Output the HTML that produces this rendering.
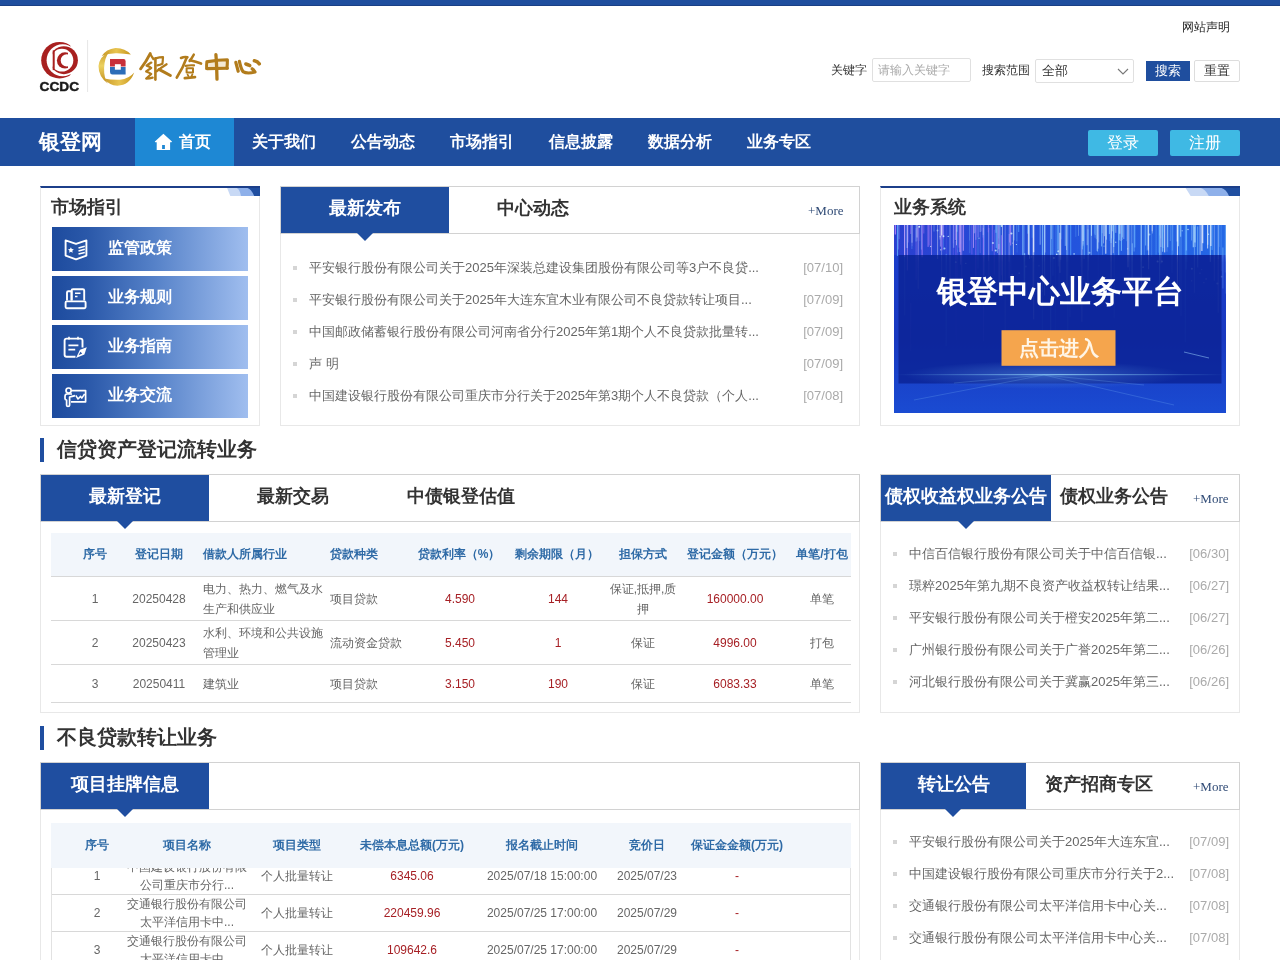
<!DOCTYPE html>
<html><head><meta charset="utf-8">
<style>
*{margin:0;padding:0;box-sizing:border-box}
html,body{width:1280px;height:960px;overflow:hidden;background:#fff}
body{position:relative;font-family:"Liberation Sans",sans-serif;color:#333;font-size:13px}
.a{position:absolute}
.topbar{left:0;top:0;width:1280px;height:6px;background:#1f4e9e;border-bottom:1px solid #1a3f85}
.nav{left:0;top:118px;width:1280px;height:48px;background:#1f4e9e}
.nav .brand{position:absolute;left:39px;top:0;line-height:48px;font-size:21px;font-weight:bold;color:#fff}
.nav .it{position:absolute;top:0;width:99px;height:48px;line-height:48px;text-align:center;font-size:16px;font-weight:bold;color:#fff}
.nav .on{background:#1e88d4}
.nav .btn{position:absolute;top:12px;width:70px;height:26px;line-height:26px;text-align:center;font-size:16px;color:#fff;background:#3fb9e4;border-radius:2px}
.corner{position:absolute;right:-1px;top:-2px;width:34px;height:10px}
.ptitle{position:absolute;font-size:18px;font-weight:bold;color:#333;line-height:20px}
.menu{position:absolute;left:11px;width:196px;height:44px;background:linear-gradient(90deg,#1d4b9e 0%,#2a58a9 18%,#5581c8 52%,#a0beef 100%)}
.menu span{position:absolute;left:56px;top:-1px;line-height:44px;font-size:16px;font-weight:bold;color:#fff}
.menu svg{position:absolute;left:4px;top:5px}
.hd{position:absolute;left:0;top:0;right:0;height:48px;border:1px solid #d2d2d2}
.tab{position:absolute;top:0;height:46px;line-height:42px;text-align:center;font-size:18px;font-weight:bold;color:#333}
.tab.on{background:#1f4ea0;color:#fff}
.tri{position:absolute;width:0;height:0;border-left:8px solid transparent;border-right:8px solid transparent;border-top:8px solid #1f4ea0}
.more{position:absolute;font-family:"Liberation Serif",serif;font-size:13px;color:#2f4a75;line-height:16px}
.lst{position:absolute;left:0;right:0}
.li{position:absolute;left:0;right:0;height:32px;line-height:32px;font-size:13px;color:#666;white-space:nowrap}
.li i{position:absolute;top:14px;width:4px;height:4px;background:#d5d5d5}
.li b{position:absolute;font-weight:normal}
.li em{position:absolute;font-style:normal;color:#aaa}
.tbh{position:absolute;background:#f2f6fb;border-bottom:1px solid #d8d8d8}
.th{position:absolute;font-size:12px;font-weight:bold;color:#2e6aa6;white-space:nowrap;line-height:20px}
.td{position:absolute;font-size:12px;color:#666;line-height:20px;white-space:nowrap}
.red{color:#a61f24}
.rl{position:absolute;height:1px;background:#d8d8d8}
.c{transform:translateX(-50%);text-align:center}
.sec{position:absolute;left:40px;width:4px;height:24px;background:#1f4ea0}
.sect{position:absolute;left:57px;font-size:20px;font-weight:bold;color:#333;line-height:24px}
</style></head><body><div style="position:absolute;left:0;top:0;width:1280px;height:960px;will-change:transform">
<div class="a topbar"></div>

<!-- logo -->
<svg class="a" style="left:0;top:0" width="280" height="110" viewBox="0 0 280 110">
  <defs>
    <mask id="m1"><rect width="280" height="110" fill="#000"/><circle cx="59.5" cy="60.2" r="18.3" fill="#fff"/><circle cx="62.6" cy="60.2" r="16" fill="#000"/><rect x="70.5" y="0" width="30" height="110" fill="#000"/></mask>
    <mask id="m2"><rect width="280" height="110" fill="#000"/><circle cx="63.9" cy="60.2" r="14" fill="#fff"/><circle cx="61.9" cy="60.2" r="11.4" fill="#000"/><rect x="0" y="0" width="52.7" height="110" fill="#000"/><rect x="52.7" y="50.4" width="2" height="19.7" fill="#fff"/></mask>
    <mask id="m3"><rect width="280" height="110" fill="#000"/><circle cx="65" cy="60.4" r="8.1" fill="#fff"/><circle cx="66.8" cy="60.4" r="6.1" fill="#000"/><rect x="68" y="0" width="30" height="110" fill="#000"/></mask>
    <linearGradient id="gold" x1="0" y1="0" x2="1" y2="0"><stop offset="0" stop-color="#c99a2a"/><stop offset="0.5" stop-color="#e8c450"/><stop offset="1" stop-color="#c7961f"/></linearGradient><linearGradient id="gold2" x1="0" y1="0" x2="0" y2="1"><stop offset="0" stop-color="#c99a2a"/><stop offset="0.45" stop-color="#ecd160"/><stop offset="1" stop-color="#c18c1c"/></linearGradient>
  </defs>
  <rect width="280" height="110" fill="#a8201f" mask="url(#m1)"/>
  <rect width="280" height="110" fill="#a8201f" mask="url(#m2)"/>
  <rect width="280" height="110" fill="#a8201f" mask="url(#m3)"/>
  <text x="39.6" y="91.4" font-family="Liberation Sans" font-weight="bold" font-size="13.2" fill="#1a1a1a" stroke="#1a1a1a" stroke-width="0.45" textLength="39.4" lengthAdjust="spacingAndGlyphs">CCDC</text>
  <line x1="87.6" y1="40" x2="87.6" y2="92" stroke="#e6e6e6" stroke-width="1"/>
  <path d="M101.8 56 Q106 49.2 115.5 48 Q125 47.8 130.9 54.6 Q124 53.8 117 53.3 Q109 53 101.8 56 Z" fill="url(#gold)"/>
  <path d="M109.4 51.4 Q99.4 56.5 98.5 66 Q98.5 77 107.8 83.4 Q103.8 78 104.1 68 Q104.3 58 109.4 51.4 Z" fill="url(#gold2)"/>
  <path d="M104.2 78.4 Q109 85.2 117.5 85.7 Q129.5 85.6 134.2 72.6 Q129 79 120 79.7 Q111 80 104.2 78.4 Z" fill="url(#gold)"/>
  <path d="M110 59.1 H123.6 Q125.6 59.1 125.6 61.5 V66.6 H110 Z" fill="#c8303a"/>
  <path d="M110 67 H125.6 V74.5 H112.4 Q110 74.5 110 72 Z" fill="#2c6db8"/>
  <rect x="114.9" y="64.2" width="5.9" height="5.5" fill="#fff"/>
  <g fill="none" stroke="#b27c1c" stroke-linecap="round" stroke-linejoin="round">
  <!-- 銀 -->
  <path d="M150.2 53.6 Q146 62 140.6 68.8" stroke-width="2.9"/>
  <path d="M150.4 54.2 Q152 57 153.4 59" stroke-width="2.3"/>
  <path d="M151.3 62.6 Q148 64.5 146.6 65.6 Q150 66.6 151.2 68 Q148 70 146.2 71.5 Q150 72.8 151.2 74 Q148 77 146.2 78.6 Q149.5 78.6 152.6 77.6" stroke-width="2.3"/>
  <path d="M155.4 58.4 V79.6" stroke-width="2.6"/>
  <path d="M155.6 58.4 Q159.6 57.2 163 57.2 Q162.8 61 162.4 63.8 Q160 65 157.4 65.4" stroke-width="2.2"/>
  <path d="M156.6 71.4 Q161 67.6 166.6 64.2" stroke-width="2.2"/>
  <path d="M159 69.4 Q164 72 170.4 75.6" stroke-width="2.9"/>
  <!-- 登 -->
  <path d="M181 58 Q184.5 56.4 187.4 57.2" stroke-width="2.6"/>
  <path d="M186.8 57.4 Q183 68 176.8 77.6" stroke-width="2.7"/>
  <path d="M193.8 54.6 Q192 58 189.6 61" stroke-width="2.4"/>
  <path d="M190 60.2 Q196 61.6 201 63.6" stroke-width="2.7"/>
  <path d="M185.6 65.8 Q190 65 194 65.4" stroke-width="2.2"/>
  <path d="M186.6 68.2 V72.6 M186.6 68.2 H193 V72.6 M186.6 72.6 H193" stroke-width="2"/>
  <path d="M187.6 74.6 L188.4 76 M192.4 74.4 L191.6 76" stroke-width="1.8"/>
  <path d="M184.8 78.2 Q190 77.6 195 77.2" stroke-width="2.7"/>
  <!-- 中 -->
  <path d="M208 62.4 L226.6 60.6 L226.6 67.6 L207.6 68 Z" fill="#c8902a" fill-opacity="0.2" stroke="none"/>
  <path d="M215.9 54.6 Q216.6 62 217 79.2" stroke-width="3.3"/>
  <path d="M206.8 61.6 Q206.4 65 206.6 68.6" stroke-width="2.9"/>
  <path d="M208 61.6 Q218 60 227.4 59.8 Q227.4 64 227 68.2" stroke-width="3.1"/>
  <path d="M207 68.6 Q217 68.2 227.4 68.2" stroke-width="3.1"/>
  <!-- 心 -->
  <path d="M235.8 62.4 Q237 67 238.2 71.2" stroke-width="3.2"/>
  <path d="M239.4 61.4 Q241 69 243 71.6 Q247 74.2 255 72 Q254 70 252.2 68.8" stroke-width="3.2"/>
  <path d="M245.8 64 Q248 64.6 249.8 65.6" stroke-width="3.4"/>
  <path d="M254.4 60.8 Q257.6 61.4 259.2 63.8" stroke-width="3.6"/>
</g>
</svg>

<div class="a" style="left:1182px;top:19px;font-size:12px;color:#222;line-height:16px">网站声明</div>

<!-- search -->
<div class="a" style="left:831px;top:62px;font-size:12px;line-height:16px;color:#333">关键字</div>
<div class="a" style="left:872px;top:58px;width:99px;height:24px;border:1px solid #e0e0e0;border-radius:2px;font-size:12px;line-height:22px;color:#aaa;padding-left:5px">请输入关键字</div>
<div class="a" style="left:982px;top:62px;font-size:12px;line-height:16px;color:#333">搜索范围</div>
<div class="a" style="left:1035px;top:59px;width:99px;height:24px;border:1px solid #e0e0e0;border-radius:2px;font-size:13px;line-height:22px;color:#333;padding-left:6px">全部</div>
<svg class="a" style="left:1117px;top:66px" width="12" height="10"><path d="M1 3 L6 8 L11 3" fill="none" stroke="#777" stroke-width="1.1"/></svg>
<div class="a" style="left:1146px;top:61px;width:44px;height:20px;background:#1f4e9e;color:#fff;font-size:13px;line-height:20px;text-align:center">搜索</div>
<div class="a" style="left:1194px;top:60px;width:46px;height:22px;border:1px solid #ddd;border-radius:2px;color:#333;font-size:13px;line-height:20px;text-align:center">重置</div>

<!-- nav -->
<div class="a nav">
  <div class="brand">银登网</div>
  <div class="it on" style="left:135px">
    <svg style="position:absolute;left:19px;top:15px" width="19" height="18" viewBox="0 0 19 18"><path fill-rule="evenodd" d="M9.4 0.8 L17.9 8.4 Q18.2 9.2 17.3 9.2 H16.1 V16.9 H2.7 V9.2 H1.5 Q0.6 9.2 0.9 8.4 Z M8.1 11.9 H10.9 V15.9 H8.1 Z" fill="#fff"/></svg>
    <span style="position:absolute;left:44px">首页</span>
  </div>
  <div class="it" style="left:234px">关于我们</div>
  <div class="it" style="left:333px">公告动态</div>
  <div class="it" style="left:432px">市场指引</div>
  <div class="it" style="left:531px">信息披露</div>
  <div class="it" style="left:630px">数据分析</div>
  <div class="it" style="left:729px">业务专区</div>
  <div class="btn" style="left:1088px">登录</div>
  <div class="btn" style="left:1170px">注册</div>
</div>

<!-- ROW1 -->
<div class="a" style="left:40px;top:186px;width:220px;height:240px;border:1px solid #e8e8e8;border-top:2px solid #1c3f8a">
  
  <div class="ptitle" style="left:10px;top:9px">市场指引</div>
  <div class="menu" style="top:39px"><svg width="40" height="36" viewBox="0 0 40 36" fill="none" stroke="#fff" stroke-width="1.9" stroke-linejoin="round"><path d="M9.6 8.4 L20 11.8 L30.4 8.4 V23.6 L20 27.4 L9.6 23.6 Z"/><path d="M14.9 15.2 l0.9 1.9 2 .2 -1.5 1.4 .4 2 -1.8-1 -1.8 1 .4-2 -1.5-1.4 2-.2 Z" fill="#fff" stroke="none"/><path d="M22.5 16 L28.8 14.2 M22.5 19 L28.8 17.2 M22.5 22 L28.8 20.4" stroke-width="1.5"/></svg><span>监管政策</span></div>
  <div class="menu" style="top:88px"><svg width="40" height="36" viewBox="0 0 40 36" fill="none" stroke="#fff" stroke-width="1.9" stroke-linejoin="round"><path d="M11 19.6 V11.5 Q11 10.2 12.3 10.2 H15.6 V19.6"/><path d="M15.6 19.6 V9.6 Q15.6 8.2 17 8.2 H26.8 Q28.2 8.2 28.2 9.6 V19.6"/><rect x="9.6" y="20.4" width="20" height="6.8" rx="1.2"/><path d="M19 12.2 H24.5 M19 15.6 H21.5" stroke-width="1.5"/></svg><span>业务规则</span></div>
  <div class="menu" style="top:137px"><svg width="40" height="36" viewBox="0 0 40 36" fill="none" stroke="#fff" stroke-width="1.9" stroke-linejoin="round"><path d="M19.5 26.8 H10.6 Q8.6 26.8 8.6 24.8 V10.6 Q8.6 8.6 10.6 8.6 H24.5 Q26.5 8.6 26.5 10.6 V17.6"/><path d="M13 6.8 V9.6 M22 6.8 V9.6 M12.4 15.4 H22.4 M12.4 19.6 H19.2" stroke-width="1.6"/><path d="M20 28 L24 19.8 L30.8 17.2 L28.4 24.6 Z" fill="#fff" stroke="none"/><path d="M22.6 25.2 L26.2 23.6 L24.4 21.8 Z" fill="#2553a6" stroke="none"/></svg><span>业务指南</span></div>
  <div class="menu" style="top:186px"><svg width="40" height="36" viewBox="0 0 40 36" fill="none" stroke="#fff" stroke-width="1.7" stroke-linejoin="round"><circle cx="12.6" cy="11.6" r="2.6"/><path d="M16 15 H11 Q9 15 9 17.5 V19.6 Q9 21 10.6 21 V26.2 Q10.6 27.4 12 27.4 Q13.6 27.4 13.6 26.2 V18 Q16 17.4 19 16.6"/><path d="M16 11.6 H29.6 V22.8 H15"/><path d="M19.8 16.4 L22 20 L24.6 17.4 L25.8 19.2 L28.6 15" stroke-width="1.5"/></svg><span>业务交流</span></div>
</div>

<div class="a" style="left:280px;top:186px;width:580px;height:240px;border:1px solid #e8e8e8">
  <div class="hd" style="left:-1px;top:-1px;right:-1px"></div>
  <div class="tab on" style="left:0;width:168px">最新发布</div>
  <div class="tri" style="left:76px;top:46px"></div>
  <div class="tab" style="left:168px;width:168px">中心动态</div>
  <div class="more" style="left:527px;top:16px">+More</div>
  <div class="lst" style="top:65px">
    <div class="li" style="top:0"><i style="left:12px"></i><b style="left:28px">平安银行股份有限公司关于2025年深装总建设集团股份有限公司等3户不良贷...</b><em style="right:16px">[07/10]</em></div>
    <div class="li" style="top:32px"><i style="left:12px"></i><b style="left:28px">平安银行股份有限公司关于2025年大连东宜木业有限公司不良贷款转让项目...</b><em style="right:16px">[07/09]</em></div>
    <div class="li" style="top:64px"><i style="left:12px"></i><b style="left:28px">中国邮政储蓄银行股份有限公司河南省分行2025年第1期个人不良贷款批量转...</b><em style="right:16px">[07/09]</em></div>
    <div class="li" style="top:96px"><i style="left:12px"></i><b style="left:28px">声 明</b><em style="right:16px">[07/09]</em></div>
    <div class="li" style="top:128px"><i style="left:12px"></i><b style="left:28px">中国建设银行股份有限公司重庆市分行关于2025年第3期个人不良贷款（个人...</b><em style="right:16px">[07/08]</em></div>
  </div>
</div>

<div class="a" style="left:880px;top:186px;width:360px;height:240px;border:1px solid #e8e8e8;border-top:2px solid #1c3f8a">
  
  <div class="ptitle" style="left:13px;top:9px">业务系统</div>
  <div id="banner" style="position:absolute;left:13px;top:37px;width:332px;height:188px;background:#1a47c4;overflow:hidden">
<svg width="332" height="188" viewBox="0 0 332 188" style="position:absolute;left:0;top:0">
<defs>
<linearGradient id="topg" x1="0" y1="0" x2="1" y2="0"><stop offset="0" stop-color="#2a3fd0"/><stop offset="0.5" stop-color="#2352dc"/><stop offset="1" stop-color="#2468e6"/></linearGradient><linearGradient id="bg1" x1="0" y1="0" x2="0" y2="1"><stop offset="0" stop-color="#1b3fcf"/><stop offset="0.6" stop-color="#1838c0"/><stop offset="1" stop-color="#1a4bd2"/></linearGradient>
<linearGradient id="fade" x1="0" y1="0" x2="0" y2="1"><stop offset="0" stop-color="#fff" stop-opacity="1"/><stop offset="0.16" stop-color="#fff" stop-opacity="1"/><stop offset="0.2" stop-color="#fff" stop-opacity="0.55"/><stop offset="0.7" stop-color="#fff" stop-opacity="0.25"/><stop offset="1" stop-color="#fff" stop-opacity="0"/></linearGradient>
<mask id="fm"><rect width="332" height="188" fill="url(#fade)"/></mask>
<radialGradient id="glow" cx="0.5" cy="0.5" r="0.5"><stop offset="0" stop-color="#7fc8ff" stop-opacity="0.6"/><stop offset="1" stop-color="#7fc8ff" stop-opacity="0"/></radialGradient>
<linearGradient id="hl" x1="0" y1="0" x2="1" y2="0"><stop offset="0" stop-color="#7fd0ff" stop-opacity="0"/><stop offset="0.5" stop-color="#9fe0ff" stop-opacity="0.7"/><stop offset="1" stop-color="#7fd0ff" stop-opacity="0"/></linearGradient>
</defs>
<rect width="332" height="188" fill="url(#bg1)"/><rect width="332" height="30" fill="url(#topg)"/>
<g mask="url(#fm)"><line x1="150.2" y1="0.0" x2="150.2" y2="30.0" stroke="#8fd0ff" stroke-width="0.7" stroke-opacity="0.60"/><line x1="266.9" y1="0.0" x2="266.9" y2="22.0" stroke="#ffffff" stroke-width="1.1" stroke-opacity="0.39"/><line x1="320.3" y1="0.2" x2="320.3" y2="55.8" stroke="#ffffff" stroke-width="0.5" stroke-opacity="0.62"/><line x1="63.1" y1="0.0" x2="63.1" y2="6.8" stroke="#8fd0ff" stroke-width="0.9" stroke-opacity="0.56"/><line x1="165.9" y1="7.8" x2="165.9" y2="47.9" stroke="#ffffff" stroke-width="0.9" stroke-opacity="0.90"/><line x1="104.7" y1="0.0" x2="104.7" y2="13.5" stroke="#60b0ff" stroke-width="0.5" stroke-opacity="0.54"/><line x1="318.1" y1="0.0" x2="318.1" y2="25.0" stroke="#60b0ff" stroke-width="1.1" stroke-opacity="0.58"/><line x1="24.2" y1="2.1" x2="24.2" y2="63.9" stroke="#ffffff" stroke-width="0.7" stroke-opacity="0.50"/><line x1="81.8" y1="0.0" x2="81.8" y2="7.6" stroke="#a070ff" stroke-width="0.7" stroke-opacity="0.41"/><line x1="327.1" y1="0.0" x2="327.1" y2="46.0" stroke="#8fd0ff" stroke-width="0.5" stroke-opacity="0.54"/><line x1="89.6" y1="0.0" x2="89.6" y2="116.2" stroke="#a070ff" stroke-width="0.5" stroke-opacity="0.83"/><line x1="14.0" y1="0.0" x2="14.0" y2="17.5" stroke="#c58cff" stroke-width="0.5" stroke-opacity="0.80"/><line x1="69.3" y1="0.0" x2="69.3" y2="25.8" stroke="#e0b0ff" stroke-width="1.1" stroke-opacity="0.67"/><line x1="276.3" y1="0.0" x2="276.3" y2="16.0" stroke="#8fd0ff" stroke-width="0.7" stroke-opacity="0.49"/><line x1="240.8" y1="0.0" x2="240.8" y2="22.4" stroke="#60b0ff" stroke-width="1.1" stroke-opacity="0.71"/><line x1="200.4" y1="0.0" x2="200.4" y2="8.7" stroke="#60b0ff" stroke-width="0.9" stroke-opacity="0.44"/><line x1="139.7" y1="0.0" x2="139.7" y2="94.4" stroke="#ffffff" stroke-width="0.7" stroke-opacity="0.86"/><line x1="75.8" y1="0.0" x2="75.8" y2="28.2" stroke="#8fd0ff" stroke-width="0.5" stroke-opacity="0.47"/><line x1="23.0" y1="0.0" x2="23.0" y2="12.5" stroke="#ffffff" stroke-width="0.9" stroke-opacity="0.62"/><line x1="46.0" y1="0.0" x2="46.0" y2="14.6" stroke="#ffffff" stroke-width="0.5" stroke-opacity="0.61"/><line x1="157.6" y1="0.0" x2="157.6" y2="14.1" stroke="#ffffff" stroke-width="0.9" stroke-opacity="0.34"/><line x1="105.9" y1="0.0" x2="105.9" y2="65.3" stroke="#8fd0ff" stroke-width="0.9" stroke-opacity="0.74"/><line x1="116.8" y1="0.0" x2="116.8" y2="70.0" stroke="#60b0ff" stroke-width="0.5" stroke-opacity="0.55"/><line x1="207.5" y1="0.0" x2="207.5" y2="21.1" stroke="#ffffff" stroke-width="0.9" stroke-opacity="0.35"/><line x1="292.1" y1="0.0" x2="292.1" y2="44.4" stroke="#60b0ff" stroke-width="1.1" stroke-opacity="0.65"/><line x1="278.3" y1="0.0" x2="278.3" y2="25.5" stroke="#8fd0ff" stroke-width="0.5" stroke-opacity="0.59"/><line x1="165.1" y1="0.4" x2="165.1" y2="71.0" stroke="#8fd0ff" stroke-width="0.7" stroke-opacity="0.48"/><line x1="250.3" y1="0.0" x2="250.3" y2="30.2" stroke="#60b0ff" stroke-width="0.9" stroke-opacity="0.44"/><line x1="65.9" y1="0.0" x2="65.9" y2="27.0" stroke="#e0b0ff" stroke-width="0.9" stroke-opacity="0.83"/><line x1="69.7" y1="0.0" x2="69.7" y2="15.1" stroke="#a070ff" stroke-width="0.7" stroke-opacity="0.32"/><line x1="37.5" y1="0.0" x2="37.5" y2="30.1" stroke="#e0b0ff" stroke-width="0.9" stroke-opacity="0.53"/><line x1="237.8" y1="0.0" x2="237.8" y2="56.2" stroke="#b8e4ff" stroke-width="0.5" stroke-opacity="0.80"/><line x1="225.2" y1="0.0" x2="225.2" y2="15.2" stroke="#8fd0ff" stroke-width="1.1" stroke-opacity="0.64"/><line x1="151.0" y1="0.0" x2="151.0" y2="27.6" stroke="#ffffff" stroke-width="1.1" stroke-opacity="0.33"/><line x1="36.2" y1="0.0" x2="36.2" y2="22.6" stroke="#a070ff" stroke-width="0.9" stroke-opacity="0.35"/><line x1="59.3" y1="0.0" x2="59.3" y2="18.3" stroke="#a070ff" stroke-width="0.7" stroke-opacity="0.41"/><line x1="130.6" y1="28.3" x2="130.6" y2="70.3" stroke="#8fd0ff" stroke-width="1.1" stroke-opacity="0.73"/><line x1="150.6" y1="0.0" x2="150.6" y2="70.5" stroke="#b8e4ff" stroke-width="1.1" stroke-opacity="0.64"/><line x1="108.4" y1="0.0" x2="108.4" y2="66.9" stroke="#ffffff" stroke-width="0.7" stroke-opacity="0.78"/><line x1="80.4" y1="0.0" x2="80.4" y2="8.3" stroke="#b8e4ff" stroke-width="0.5" stroke-opacity="0.89"/><line x1="115.7" y1="0.0" x2="115.7" y2="17.5" stroke="#c58cff" stroke-width="0.7" stroke-opacity="0.76"/><line x1="268.6" y1="0.0" x2="268.6" y2="26.8" stroke="#8fd0ff" stroke-width="1.1" stroke-opacity="0.77"/><line x1="49.4" y1="0.0" x2="49.4" y2="24.8" stroke="#60b0ff" stroke-width="0.5" stroke-opacity="0.71"/><line x1="251.6" y1="0.0" x2="251.6" y2="20.5" stroke="#8fd0ff" stroke-width="0.9" stroke-opacity="0.64"/><line x1="103.5" y1="0.0" x2="103.5" y2="28.0" stroke="#b8e4ff" stroke-width="1.1" stroke-opacity="0.42"/><line x1="66.7" y1="0.0" x2="66.7" y2="19.1" stroke="#60b0ff" stroke-width="0.5" stroke-opacity="0.32"/><line x1="163.0" y1="0.0" x2="163.0" y2="28.3" stroke="#60b0ff" stroke-width="0.9" stroke-opacity="0.55"/><line x1="81.8" y1="0.0" x2="81.8" y2="14.8" stroke="#b8e4ff" stroke-width="0.5" stroke-opacity="0.86"/><line x1="63.6" y1="24.4" x2="63.6" y2="71.3" stroke="#c58cff" stroke-width="0.5" stroke-opacity="0.31"/><line x1="228.1" y1="0.0" x2="228.1" y2="15.2" stroke="#ffffff" stroke-width="0.9" stroke-opacity="0.36"/><line x1="238.3" y1="18.3" x2="238.3" y2="68.9" stroke="#8fd0ff" stroke-width="0.7" stroke-opacity="0.80"/><line x1="286.8" y1="0.0" x2="286.8" y2="11.7" stroke="#8fd0ff" stroke-width="0.7" stroke-opacity="0.65"/><line x1="303.7" y1="1.4" x2="303.7" y2="42.4" stroke="#8fd0ff" stroke-width="0.7" stroke-opacity="0.83"/><line x1="258.4" y1="0.0" x2="258.4" y2="8.5" stroke="#ffffff" stroke-width="0.9" stroke-opacity="0.38"/><line x1="128.8" y1="0.0" x2="128.8" y2="30.5" stroke="#8fd0ff" stroke-width="1.1" stroke-opacity="0.72"/><line x1="208.5" y1="0.0" x2="208.5" y2="29.8" stroke="#b8e4ff" stroke-width="0.5" stroke-opacity="0.51"/><line x1="234.0" y1="0.0" x2="234.0" y2="42.2" stroke="#ffffff" stroke-width="1.1" stroke-opacity="0.80"/><line x1="35.2" y1="0.0" x2="35.2" y2="20.3" stroke="#c58cff" stroke-width="0.5" stroke-opacity="0.64"/><line x1="67.7" y1="0.0" x2="67.7" y2="74.5" stroke="#e0b0ff" stroke-width="1.1" stroke-opacity="0.36"/><line x1="25.8" y1="0.0" x2="25.8" y2="16.2" stroke="#a070ff" stroke-width="0.5" stroke-opacity="0.51"/><line x1="210.5" y1="0.0" x2="210.5" y2="11.2" stroke="#b8e4ff" stroke-width="1.1" stroke-opacity="0.52"/><line x1="306.1" y1="0.0" x2="306.1" y2="29.7" stroke="#ffffff" stroke-width="1.1" stroke-opacity="0.49"/><line x1="189.1" y1="0.0" x2="189.1" y2="21.2" stroke="#b8e4ff" stroke-width="0.5" stroke-opacity="0.76"/><line x1="247.2" y1="0.0" x2="247.2" y2="65.7" stroke="#b8e4ff" stroke-width="1.1" stroke-opacity="0.84"/><line x1="254.1" y1="0.0" x2="254.1" y2="24.8" stroke="#ffffff" stroke-width="0.9" stroke-opacity="0.58"/><line x1="328.9" y1="22.6" x2="328.9" y2="63.5" stroke="#8fd0ff" stroke-width="1.1" stroke-opacity="0.48"/><line x1="189.1" y1="0.0" x2="189.1" y2="16.1" stroke="#ffffff" stroke-width="1.1" stroke-opacity="0.69"/><line x1="325.4" y1="0.0" x2="325.4" y2="22.0" stroke="#60b0ff" stroke-width="0.5" stroke-opacity="0.45"/><line x1="252.8" y1="0.0" x2="252.8" y2="25.5" stroke="#60b0ff" stroke-width="0.5" stroke-opacity="0.50"/><line x1="211.8" y1="0.0" x2="211.8" y2="28.8" stroke="#ffffff" stroke-width="1.1" stroke-opacity="0.76"/><line x1="308.8" y1="0.0" x2="308.8" y2="18.3" stroke="#ffffff" stroke-width="1.1" stroke-opacity="0.67"/><line x1="313.8" y1="0.0" x2="313.8" y2="19.7" stroke="#b8e4ff" stroke-width="1.1" stroke-opacity="0.52"/><line x1="217.5" y1="0.0" x2="217.5" y2="13.4" stroke="#ffffff" stroke-width="0.7" stroke-opacity="0.48"/><line x1="194.5" y1="0.0" x2="194.5" y2="45.4" stroke="#b8e4ff" stroke-width="1.1" stroke-opacity="0.33"/><line x1="16.7" y1="78.0" x2="16.7" y2="126.1" stroke="#c58cff" stroke-width="0.5" stroke-opacity="0.56"/><line x1="173.8" y1="0.0" x2="173.8" y2="110.6" stroke="#8fd0ff" stroke-width="0.5" stroke-opacity="0.89"/><line x1="16.7" y1="0.0" x2="16.7" y2="9.1" stroke="#a070ff" stroke-width="1.1" stroke-opacity="0.51"/><line x1="46.4" y1="0.0" x2="46.4" y2="21.6" stroke="#e0b0ff" stroke-width="0.7" stroke-opacity="0.71"/><line x1="316.3" y1="0.0" x2="316.3" y2="36.9" stroke="#b8e4ff" stroke-width="0.9" stroke-opacity="0.77"/><line x1="90.1" y1="0.0" x2="90.1" y2="53.2" stroke="#8fd0ff" stroke-width="0.7" stroke-opacity="0.68"/><line x1="166.7" y1="0.0" x2="166.7" y2="34.8" stroke="#ffffff" stroke-width="0.9" stroke-opacity="0.68"/><line x1="86.2" y1="0.0" x2="86.2" y2="7.0" stroke="#8fd0ff" stroke-width="0.7" stroke-opacity="0.75"/><line x1="209.5" y1="0.0" x2="209.5" y2="18.4" stroke="#ffffff" stroke-width="0.5" stroke-opacity="0.75"/><line x1="148.5" y1="0.0" x2="148.5" y2="66.9" stroke="#b8e4ff" stroke-width="1.1" stroke-opacity="0.57"/><line x1="268.9" y1="0.0" x2="268.9" y2="23.0" stroke="#8fd0ff" stroke-width="1.1" stroke-opacity="0.50"/><line x1="217.1" y1="0.0" x2="217.1" y2="18.0" stroke="#60b0ff" stroke-width="1.1" stroke-opacity="0.63"/><line x1="270.7" y1="0.0" x2="270.7" y2="27.4" stroke="#ffffff" stroke-width="0.9" stroke-opacity="0.85"/><line x1="164.3" y1="0.0" x2="164.3" y2="41.4" stroke="#b8e4ff" stroke-width="0.9" stroke-opacity="0.43"/><line x1="300.9" y1="0.0" x2="300.9" y2="17.5" stroke="#b8e4ff" stroke-width="1.1" stroke-opacity="0.84"/><line x1="176.0" y1="50.4" x2="176.0" y2="92.1" stroke="#8fd0ff" stroke-width="0.5" stroke-opacity="0.74"/><line x1="120.1" y1="0.0" x2="120.1" y2="15.4" stroke="#8fd0ff" stroke-width="0.9" stroke-opacity="0.53"/><line x1="264.6" y1="0.0" x2="264.6" y2="27.7" stroke="#60b0ff" stroke-width="0.9" stroke-opacity="0.41"/><line x1="269.5" y1="0.0" x2="269.5" y2="7.5" stroke="#60b0ff" stroke-width="0.5" stroke-opacity="0.31"/><line x1="193.2" y1="0.0" x2="193.2" y2="20.2" stroke="#ffffff" stroke-width="0.9" stroke-opacity="0.46"/><line x1="28.1" y1="0.0" x2="28.1" y2="32.2" stroke="#c58cff" stroke-width="1.1" stroke-opacity="0.69"/><line x1="254.1" y1="0.0" x2="254.1" y2="25.9" stroke="#b8e4ff" stroke-width="0.7" stroke-opacity="0.50"/><line x1="163.9" y1="0.0" x2="163.9" y2="24.7" stroke="#60b0ff" stroke-width="0.9" stroke-opacity="0.85"/><line x1="283.4" y1="0.0" x2="283.4" y2="66.7" stroke="#ffffff" stroke-width="0.9" stroke-opacity="0.87"/><line x1="235.7" y1="0.0" x2="235.7" y2="46.1" stroke="#8fd0ff" stroke-width="1.1" stroke-opacity="0.39"/><line x1="227.1" y1="0.0" x2="227.1" y2="16.1" stroke="#ffffff" stroke-width="1.1" stroke-opacity="0.46"/><line x1="102.4" y1="0.0" x2="102.4" y2="22.8" stroke="#a070ff" stroke-width="0.5" stroke-opacity="0.41"/><line x1="193.9" y1="4.2" x2="193.9" y2="62.5" stroke="#8fd0ff" stroke-width="1.1" stroke-opacity="0.43"/><line x1="197.5" y1="0.0" x2="197.5" y2="10.8" stroke="#b8e4ff" stroke-width="1.1" stroke-opacity="0.75"/><line x1="283.3" y1="0.0" x2="283.3" y2="16.5" stroke="#ffffff" stroke-width="1.1" stroke-opacity="0.70"/><line x1="286.4" y1="0.0" x2="286.4" y2="11.7" stroke="#b8e4ff" stroke-width="0.5" stroke-opacity="0.89"/><line x1="218.3" y1="0.0" x2="218.3" y2="6.3" stroke="#8fd0ff" stroke-width="1.1" stroke-opacity="0.52"/><line x1="201.2" y1="0.0" x2="201.2" y2="10.1" stroke="#8fd0ff" stroke-width="0.9" stroke-opacity="0.46"/><line x1="171.3" y1="0.0" x2="171.3" y2="20.9" stroke="#8fd0ff" stroke-width="0.7" stroke-opacity="0.85"/><line x1="27.4" y1="0.0" x2="27.4" y2="24.6" stroke="#b8e4ff" stroke-width="0.5" stroke-opacity="0.58"/><line x1="262.1" y1="0.0" x2="262.1" y2="29.8" stroke="#60b0ff" stroke-width="1.1" stroke-opacity="0.43"/><line x1="52.3" y1="0.0" x2="52.3" y2="40.6" stroke="#a070ff" stroke-width="0.5" stroke-opacity="0.35"/><line x1="119.4" y1="0.0" x2="119.4" y2="30.3" stroke="#ffffff" stroke-width="1.1" stroke-opacity="0.58"/><line x1="4.1" y1="0.0" x2="4.1" y2="24.5" stroke="#e0b0ff" stroke-width="0.7" stroke-opacity="0.57"/><line x1="299.3" y1="0.0" x2="299.3" y2="22.3" stroke="#b8e4ff" stroke-width="1.1" stroke-opacity="0.75"/><line x1="184.5" y1="0.0" x2="184.5" y2="10.9" stroke="#b8e4ff" stroke-width="0.9" stroke-opacity="0.37"/><line x1="186.9" y1="0.0" x2="186.9" y2="41.6" stroke="#8fd0ff" stroke-width="0.5" stroke-opacity="0.36"/><line x1="43.6" y1="0.0" x2="43.6" y2="34.0" stroke="#ffffff" stroke-width="0.7" stroke-opacity="0.58"/><line x1="10.7" y1="0.0" x2="10.7" y2="90.4" stroke="#8fd0ff" stroke-width="0.7" stroke-opacity="0.50"/><line x1="254.6" y1="0.0" x2="254.6" y2="44.3" stroke="#ffffff" stroke-width="1.1" stroke-opacity="0.55"/><line x1="203.5" y1="0.0" x2="203.5" y2="26.5" stroke="#b8e4ff" stroke-width="0.9" stroke-opacity="0.62"/><line x1="62.7" y1="0.0" x2="62.7" y2="17.5" stroke="#a070ff" stroke-width="0.5" stroke-opacity="0.42"/><line x1="203.0" y1="0.0" x2="203.0" y2="25.9" stroke="#b8e4ff" stroke-width="0.7" stroke-opacity="0.63"/><line x1="190.6" y1="0.0" x2="190.6" y2="30.3" stroke="#8fd0ff" stroke-width="0.5" stroke-opacity="0.72"/><line x1="208.2" y1="0.0" x2="208.2" y2="8.2" stroke="#b8e4ff" stroke-width="0.5" stroke-opacity="0.72"/><line x1="308.4" y1="0.0" x2="308.4" y2="18.0" stroke="#ffffff" stroke-width="0.9" stroke-opacity="0.38"/><line x1="56.0" y1="0.0" x2="56.0" y2="69.8" stroke="#ffffff" stroke-width="0.9" stroke-opacity="0.39"/><line x1="227.4" y1="0.0" x2="227.4" y2="25.7" stroke="#ffffff" stroke-width="1.1" stroke-opacity="0.40"/><line x1="10.6" y1="0.0" x2="10.6" y2="31.7" stroke="#e0b0ff" stroke-width="1.1" stroke-opacity="0.70"/><line x1="204.3" y1="9.5" x2="204.3" y2="63.2" stroke="#60b0ff" stroke-width="0.5" stroke-opacity="0.32"/><line x1="189.1" y1="0.0" x2="189.1" y2="19.5" stroke="#ffffff" stroke-width="0.7" stroke-opacity="0.50"/><line x1="133.9" y1="0.0" x2="133.9" y2="8.7" stroke="#60b0ff" stroke-width="0.9" stroke-opacity="0.84"/><line x1="161.3" y1="0.0" x2="161.3" y2="118.7" stroke="#60b0ff" stroke-width="0.5" stroke-opacity="0.55"/><line x1="187.9" y1="0.0" x2="187.9" y2="96.8" stroke="#ffffff" stroke-width="0.9" stroke-opacity="0.56"/><line x1="301.2" y1="0.0" x2="301.2" y2="22.0" stroke="#b8e4ff" stroke-width="0.9" stroke-opacity="0.53"/><line x1="293.0" y1="0.0" x2="293.0" y2="37.2" stroke="#60b0ff" stroke-width="0.5" stroke-opacity="0.45"/><line x1="157.9" y1="0.0" x2="157.9" y2="29.7" stroke="#8fd0ff" stroke-width="0.5" stroke-opacity="0.69"/><line x1="331.8" y1="0.0" x2="331.8" y2="68.6" stroke="#8fd0ff" stroke-width="0.7" stroke-opacity="0.63"/><line x1="215.6" y1="0.0" x2="215.6" y2="9.2" stroke="#60b0ff" stroke-width="0.5" stroke-opacity="0.38"/><line x1="98.3" y1="0.0" x2="98.3" y2="26.2" stroke="#c58cff" stroke-width="0.9" stroke-opacity="0.57"/><line x1="229.8" y1="0.0" x2="229.8" y2="14.0" stroke="#b8e4ff" stroke-width="1.1" stroke-opacity="0.49"/><line x1="47.6" y1="0.0" x2="47.6" y2="63.8" stroke="#ffffff" stroke-width="0.7" stroke-opacity="0.42"/><line x1="104.9" y1="19.0" x2="104.9" y2="70.0" stroke="#e0b0ff" stroke-width="0.7" stroke-opacity="0.72"/><line x1="63.6" y1="0.0" x2="63.6" y2="27.5" stroke="#60b0ff" stroke-width="0.7" stroke-opacity="0.49"/><line x1="111.2" y1="0.0" x2="111.2" y2="114.5" stroke="#ffffff" stroke-width="0.7" stroke-opacity="0.40"/><line x1="89.3" y1="2.8" x2="89.3" y2="50.1" stroke="#c58cff" stroke-width="0.7" stroke-opacity="0.78"/><line x1="324.4" y1="0.0" x2="324.4" y2="34.0" stroke="#60b0ff" stroke-width="0.5" stroke-opacity="0.70"/><line x1="146.2" y1="0.0" x2="146.2" y2="19.8" stroke="#b8e4ff" stroke-width="1.1" stroke-opacity="0.47"/><line x1="266.7" y1="0.0" x2="266.7" y2="13.4" stroke="#b8e4ff" stroke-width="0.5" stroke-opacity="0.45"/><line x1="61.9" y1="15.9" x2="61.9" y2="74.4" stroke="#a070ff" stroke-width="0.5" stroke-opacity="0.75"/><line x1="59.7" y1="0.0" x2="59.7" y2="22.8" stroke="#b8e4ff" stroke-width="0.7" stroke-opacity="0.69"/><line x1="197.2" y1="0.0" x2="197.2" y2="30.6" stroke="#b8e4ff" stroke-width="0.7" stroke-opacity="0.70"/><line x1="86.2" y1="0.0" x2="86.2" y2="28.2" stroke="#e0b0ff" stroke-width="0.5" stroke-opacity="0.46"/><line x1="190.1" y1="0.0" x2="190.1" y2="34.0" stroke="#60b0ff" stroke-width="1.1" stroke-opacity="0.60"/><line x1="240.1" y1="0.0" x2="240.1" y2="26.5" stroke="#8fd0ff" stroke-width="0.7" stroke-opacity="0.68"/><line x1="17.9" y1="0.0" x2="17.9" y2="24.1" stroke="#60b0ff" stroke-width="0.5" stroke-opacity="0.74"/><line x1="215.8" y1="0.0" x2="215.8" y2="15.9" stroke="#60b0ff" stroke-width="0.5" stroke-opacity="0.70"/><line x1="104.8" y1="0.0" x2="104.8" y2="24.2" stroke="#e0b0ff" stroke-width="0.7" stroke-opacity="0.87"/><line x1="48.0" y1="0.0" x2="48.0" y2="25.4" stroke="#a070ff" stroke-width="0.9" stroke-opacity="0.83"/><line x1="156.7" y1="0.0" x2="156.7" y2="128.0" stroke="#8fd0ff" stroke-width="0.9" stroke-opacity="0.73"/><line x1="84.1" y1="0.0" x2="84.1" y2="12.3" stroke="#a070ff" stroke-width="0.7" stroke-opacity="0.86"/><line x1="13.2" y1="0.0" x2="13.2" y2="22.9" stroke="#8fd0ff" stroke-width="1.1" stroke-opacity="0.72"/><line x1="285.5" y1="0.0" x2="285.5" y2="74.9" stroke="#60b0ff" stroke-width="0.9" stroke-opacity="0.33"/><line x1="81.8" y1="0.0" x2="81.8" y2="65.2" stroke="#a070ff" stroke-width="1.1" stroke-opacity="0.54"/><line x1="148.4" y1="0.0" x2="148.4" y2="107.5" stroke="#60b0ff" stroke-width="1.1" stroke-opacity="0.42"/><line x1="24.2" y1="0.1" x2="24.2" y2="43.1" stroke="#a070ff" stroke-width="0.7" stroke-opacity="0.41"/><line x1="89.2" y1="0.0" x2="89.2" y2="10.0" stroke="#ffffff" stroke-width="0.5" stroke-opacity="0.52"/><line x1="331.3" y1="0.0" x2="331.3" y2="47.5" stroke="#b8e4ff" stroke-width="0.5" stroke-opacity="0.53"/><line x1="100.3" y1="4.8" x2="100.3" y2="49.4" stroke="#a070ff" stroke-width="1.1" stroke-opacity="0.38"/><line x1="158.9" y1="0.0" x2="158.9" y2="50.8" stroke="#60b0ff" stroke-width="1.1" stroke-opacity="0.49"/><line x1="48.9" y1="0.0" x2="48.9" y2="13.3" stroke="#a070ff" stroke-width="0.7" stroke-opacity="0.54"/><line x1="34.1" y1="0.0" x2="34.1" y2="21.9" stroke="#c58cff" stroke-width="0.9" stroke-opacity="0.75"/><line x1="219.3" y1="0.0" x2="219.3" y2="28.2" stroke="#ffffff" stroke-width="0.9" stroke-opacity="0.51"/><line x1="77.9" y1="0.0" x2="77.9" y2="29.5" stroke="#a070ff" stroke-width="0.9" stroke-opacity="0.54"/><line x1="94.5" y1="0.0" x2="94.5" y2="36.1" stroke="#b8e4ff" stroke-width="0.7" stroke-opacity="0.42"/><line x1="172.8" y1="0.0" x2="172.8" y2="70.4" stroke="#b8e4ff" stroke-width="0.9" stroke-opacity="0.59"/><line x1="232.5" y1="0.0" x2="232.5" y2="16.2" stroke="#60b0ff" stroke-width="0.9" stroke-opacity="0.34"/><line x1="18.1" y1="0.0" x2="18.1" y2="21.2" stroke="#c58cff" stroke-width="0.5" stroke-opacity="0.50"/><line x1="115.2" y1="8.9" x2="115.2" y2="53.3" stroke="#e0b0ff" stroke-width="0.9" stroke-opacity="0.41"/><line x1="316.9" y1="0.0" x2="316.9" y2="21.0" stroke="#ffffff" stroke-width="1.1" stroke-opacity="0.76"/><line x1="203.5" y1="0.0" x2="203.5" y2="7.8" stroke="#60b0ff" stroke-width="0.5" stroke-opacity="0.57"/><line x1="266.9" y1="0.0" x2="266.9" y2="38.6" stroke="#ffffff" stroke-width="0.7" stroke-opacity="0.58"/><line x1="201.0" y1="0.0" x2="201.0" y2="12.7" stroke="#60b0ff" stroke-width="0.5" stroke-opacity="0.86"/><line x1="79.5" y1="0.0" x2="79.5" y2="22.9" stroke="#e0b0ff" stroke-width="0.9" stroke-opacity="0.67"/><line x1="87.7" y1="0.0" x2="87.7" y2="6.5" stroke="#c58cff" stroke-width="0.7" stroke-opacity="0.42"/><line x1="273.7" y1="0.0" x2="273.7" y2="22.2" stroke="#b8e4ff" stroke-width="1.1" stroke-opacity="0.64"/><line x1="94.9" y1="2.9" x2="94.9" y2="51.7" stroke="#e0b0ff" stroke-width="0.7" stroke-opacity="0.49"/><line x1="291.3" y1="0.0" x2="291.3" y2="117.2" stroke="#60b0ff" stroke-width="1.1" stroke-opacity="0.49"/><line x1="13.4" y1="0.0" x2="13.4" y2="45.6" stroke="#e0b0ff" stroke-width="1.1" stroke-opacity="0.51"/><line x1="84.0" y1="0.0" x2="84.0" y2="43.4" stroke="#8fd0ff" stroke-width="0.7" stroke-opacity="0.41"/><line x1="188.4" y1="0.0" x2="188.4" y2="24.4" stroke="#8fd0ff" stroke-width="0.7" stroke-opacity="0.80"/><line x1="66.7" y1="0.0" x2="66.7" y2="39.6" stroke="#e0b0ff" stroke-width="0.7" stroke-opacity="0.88"/><line x1="89.0" y1="0.0" x2="89.0" y2="12.6" stroke="#8fd0ff" stroke-width="0.5" stroke-opacity="0.53"/><line x1="52.2" y1="28.9" x2="52.2" y2="121.0" stroke="#60b0ff" stroke-width="0.9" stroke-opacity="0.62"/><line x1="300.4" y1="1.9" x2="300.4" y2="67.8" stroke="#b8e4ff" stroke-width="0.7" stroke-opacity="0.56"/><line x1="130.0" y1="0.0" x2="130.0" y2="63.3" stroke="#8fd0ff" stroke-width="0.9" stroke-opacity="0.53"/><line x1="265.7" y1="0.0" x2="265.7" y2="10.6" stroke="#60b0ff" stroke-width="1.1" stroke-opacity="0.45"/><line x1="40.0" y1="0.0" x2="40.0" y2="6.5" stroke="#b8e4ff" stroke-width="0.9" stroke-opacity="0.39"/><line x1="75.6" y1="0.0" x2="75.6" y2="15.5" stroke="#b8e4ff" stroke-width="0.5" stroke-opacity="0.34"/><line x1="1.3" y1="0.0" x2="1.3" y2="9.6" stroke="#c58cff" stroke-width="1.1" stroke-opacity="0.89"/><line x1="116.7" y1="0.0" x2="116.7" y2="20.5" stroke="#c58cff" stroke-width="0.9" stroke-opacity="0.80"/><line x1="287.0" y1="0.0" x2="287.0" y2="91.0" stroke="#8fd0ff" stroke-width="0.5" stroke-opacity="0.73"/><line x1="313.6" y1="0.0" x2="313.6" y2="23.5" stroke="#ffffff" stroke-width="1.1" stroke-opacity="0.63"/><line x1="3.5" y1="0.0" x2="3.5" y2="30.9" stroke="#60b0ff" stroke-width="1.1" stroke-opacity="0.79"/><line x1="102.2" y1="0.0" x2="102.2" y2="23.3" stroke="#60b0ff" stroke-width="1.1" stroke-opacity="0.76"/><line x1="278.9" y1="0.0" x2="278.9" y2="29.4" stroke="#8fd0ff" stroke-width="0.7" stroke-opacity="0.31"/><line x1="107.4" y1="10.2" x2="107.4" y2="50.3" stroke="#a070ff" stroke-width="0.9" stroke-opacity="0.68"/><line x1="22.1" y1="3.1" x2="22.1" y2="54.7" stroke="#c58cff" stroke-width="0.9" stroke-opacity="0.41"/><line x1="225.8" y1="0.0" x2="225.8" y2="8.8" stroke="#ffffff" stroke-width="1.1" stroke-opacity="0.56"/><line x1="166.9" y1="0.0" x2="166.9" y2="14.4" stroke="#8fd0ff" stroke-width="0.5" stroke-opacity="0.87"/><line x1="292.3" y1="0.0" x2="292.3" y2="25.6" stroke="#8fd0ff" stroke-width="1.1" stroke-opacity="0.56"/><line x1="135.5" y1="0.0" x2="135.5" y2="33.9" stroke="#b8e4ff" stroke-width="0.7" stroke-opacity="0.87"/><line x1="258.2" y1="0.0" x2="258.2" y2="6.3" stroke="#ffffff" stroke-width="0.7" stroke-opacity="0.70"/><line x1="204.7" y1="0.0" x2="204.7" y2="17.4" stroke="#ffffff" stroke-width="0.5" stroke-opacity="0.55"/><line x1="278.0" y1="0.0" x2="278.0" y2="47.7" stroke="#60b0ff" stroke-width="0.7" stroke-opacity="0.55"/><line x1="124.7" y1="0.0" x2="124.7" y2="7.1" stroke="#60b0ff" stroke-width="1.1" stroke-opacity="0.62"/><line x1="94.3" y1="0.0" x2="94.3" y2="7.4" stroke="#a070ff" stroke-width="0.9" stroke-opacity="0.62"/><line x1="62.5" y1="0.0" x2="62.5" y2="20.3" stroke="#ffffff" stroke-width="0.7" stroke-opacity="0.75"/><line x1="62.1" y1="8.6" x2="62.1" y2="115.3" stroke="#a070ff" stroke-width="0.5" stroke-opacity="0.36"/><line x1="61.4" y1="0.0" x2="61.4" y2="14.9" stroke="#c58cff" stroke-width="1.1" stroke-opacity="0.51"/><line x1="65.1" y1="0.0" x2="65.1" y2="22.7" stroke="#c58cff" stroke-width="0.5" stroke-opacity="0.77"/><line x1="265.6" y1="0.0" x2="265.6" y2="63.5" stroke="#8fd0ff" stroke-width="0.9" stroke-opacity="0.84"/><line x1="59.3" y1="0.0" x2="59.3" y2="30.2" stroke="#a070ff" stroke-width="0.7" stroke-opacity="0.43"/><line x1="204.0" y1="0.0" x2="204.0" y2="23.7" stroke="#ffffff" stroke-width="0.7" stroke-opacity="0.59"/><line x1="176.7" y1="0.0" x2="176.7" y2="30.9" stroke="#60b0ff" stroke-width="1.1" stroke-opacity="0.64"/><line x1="5.1" y1="0.0" x2="5.1" y2="14.2" stroke="#8fd0ff" stroke-width="0.7" stroke-opacity="0.47"/><line x1="254.4" y1="0.0" x2="254.4" y2="21.1" stroke="#b8e4ff" stroke-width="0.9" stroke-opacity="0.46"/><line x1="102.0" y1="0.0" x2="102.0" y2="7.8" stroke="#8fd0ff" stroke-width="0.7" stroke-opacity="0.82"/><line x1="23.7" y1="0.0" x2="23.7" y2="15.7" stroke="#c58cff" stroke-width="0.5" stroke-opacity="0.47"/><line x1="115.0" y1="0.0" x2="115.0" y2="36.8" stroke="#b8e4ff" stroke-width="0.5" stroke-opacity="0.47"/><line x1="224.7" y1="0.0" x2="224.7" y2="30.3" stroke="#8fd0ff" stroke-width="1.1" stroke-opacity="0.75"/><line x1="212.4" y1="0.0" x2="212.4" y2="14.7" stroke="#b8e4ff" stroke-width="0.9" stroke-opacity="0.70"/><line x1="219.7" y1="0.0" x2="219.7" y2="21.9" stroke="#b8e4ff" stroke-width="1.1" stroke-opacity="0.66"/><line x1="139.7" y1="0.0" x2="139.7" y2="27.3" stroke="#ffffff" stroke-width="1.1" stroke-opacity="0.65"/><line x1="297.6" y1="0.0" x2="297.6" y2="15.5" stroke="#b8e4ff" stroke-width="0.5" stroke-opacity="0.73"/><line x1="221.8" y1="0.0" x2="221.8" y2="7.9" stroke="#ffffff" stroke-width="0.7" stroke-opacity="0.59"/><line x1="324.2" y1="0.0" x2="324.2" y2="87.7" stroke="#ffffff" stroke-width="0.5" stroke-opacity="0.69"/><line x1="22.1" y1="0.0" x2="22.1" y2="16.4" stroke="#8fd0ff" stroke-width="1.1" stroke-opacity="0.43"/><line x1="122.8" y1="0.0" x2="122.8" y2="16.3" stroke="#8fd0ff" stroke-width="0.9" stroke-opacity="0.35"/><line x1="220.2" y1="0.0" x2="220.2" y2="93.2" stroke="#8fd0ff" stroke-width="0.5" stroke-opacity="0.56"/><line x1="123.1" y1="0.0" x2="123.1" y2="27.6" stroke="#60b0ff" stroke-width="0.5" stroke-opacity="0.37"/><line x1="257.7" y1="0.0" x2="257.7" y2="32.0" stroke="#8fd0ff" stroke-width="0.7" stroke-opacity="0.34"/><line x1="220.0" y1="0.0" x2="220.0" y2="14.0" stroke="#60b0ff" stroke-width="1.1" stroke-opacity="0.45"/><line x1="18.0" y1="0.0" x2="18.0" y2="17.7" stroke="#ffffff" stroke-width="0.7" stroke-opacity="0.58"/><line x1="47.8" y1="0.0" x2="47.8" y2="10.5" stroke="#ffffff" stroke-width="1.1" stroke-opacity="0.88"/><line x1="273.0" y1="0.0" x2="273.0" y2="26.7" stroke="#b8e4ff" stroke-width="0.5" stroke-opacity="0.53"/><line x1="134.4" y1="0.0" x2="134.4" y2="29.7" stroke="#ffffff" stroke-width="1.1" stroke-opacity="0.76"/><line x1="138.2" y1="0.0" x2="138.2" y2="12.8" stroke="#60b0ff" stroke-width="0.7" stroke-opacity="0.50"/><line x1="217.1" y1="0.0" x2="217.1" y2="72.3" stroke="#ffffff" stroke-width="1.1" stroke-opacity="0.60"/><line x1="207.7" y1="0.0" x2="207.7" y2="21.6" stroke="#60b0ff" stroke-width="0.9" stroke-opacity="0.78"/><line x1="215.4" y1="0.0" x2="215.4" y2="9.0" stroke="#8fd0ff" stroke-width="1.1" stroke-opacity="0.62"/><line x1="181.8" y1="0.0" x2="181.8" y2="11.8" stroke="#60b0ff" stroke-width="0.7" stroke-opacity="0.49"/><line x1="172.6" y1="0.0" x2="172.6" y2="25.1" stroke="#ffffff" stroke-width="0.5" stroke-opacity="0.66"/><line x1="228.3" y1="0.0" x2="228.3" y2="12.4" stroke="#b8e4ff" stroke-width="0.7" stroke-opacity="0.72"/><line x1="202.3" y1="0.0" x2="202.3" y2="14.2" stroke="#b8e4ff" stroke-width="0.5" stroke-opacity="0.61"/><line x1="284.1" y1="0.0" x2="284.1" y2="21.3" stroke="#b8e4ff" stroke-width="1.1" stroke-opacity="0.87"/><line x1="29.8" y1="0.0" x2="29.8" y2="8.5" stroke="#c58cff" stroke-width="0.9" stroke-opacity="0.44"/><line x1="49.6" y1="0.0" x2="49.6" y2="13.4" stroke="#c58cff" stroke-width="0.7" stroke-opacity="0.59"/><line x1="307.9" y1="0.0" x2="307.9" y2="26.1" stroke="#ffffff" stroke-width="1.1" stroke-opacity="0.75"/><line x1="138.9" y1="0.0" x2="138.9" y2="74.2" stroke="#ffffff" stroke-width="1.1" stroke-opacity="0.34"/><line x1="227.5" y1="0.0" x2="227.5" y2="25.7" stroke="#60b0ff" stroke-width="0.9" stroke-opacity="0.78"/><circle cx="297.9" cy="43.7" r="1.0" fill="#dff" fill-opacity="0.88"/><circle cx="118.2" cy="49.9" r="0.9" fill="#dff" fill-opacity="0.75"/><circle cx="131.9" cy="41.5" r="0.9" fill="#dff" fill-opacity="0.46"/><circle cx="288.2" cy="5.8" r="0.7" fill="#dff" fill-opacity="0.47"/><circle cx="314.5" cy="9.3" r="0.7" fill="#dff" fill-opacity="0.60"/><circle cx="297.7" cy="55.8" r="0.6" fill="#dff" fill-opacity="0.75"/><circle cx="164.2" cy="26.2" r="1.0" fill="#dff" fill-opacity="0.66"/><circle cx="159.9" cy="33.0" r="1.0" fill="#dff" fill-opacity="0.79"/><circle cx="107.6" cy="0.9" r="1.0" fill="#dff" fill-opacity="0.73"/><circle cx="125.2" cy="48.2" r="0.9" fill="#dff" fill-opacity="0.63"/><circle cx="195.5" cy="27.7" r="1.0" fill="#dff" fill-opacity="0.47"/><circle cx="233.7" cy="23.8" r="0.6" fill="#dff" fill-opacity="0.64"/><circle cx="210.0" cy="21.1" r="0.7" fill="#dff" fill-opacity="0.42"/><circle cx="306.0" cy="48.2" r="0.7" fill="#dff" fill-opacity="0.52"/><circle cx="70.8" cy="54.5" r="0.5" fill="#dff" fill-opacity="0.49"/><circle cx="137.4" cy="31.9" r="0.7" fill="#dff" fill-opacity="0.46"/><circle cx="61.8" cy="37.2" r="0.9" fill="#dff" fill-opacity="0.65"/><circle cx="49.9" cy="59.6" r="0.7" fill="#dff" fill-opacity="0.48"/><circle cx="162.8" cy="29.4" r="0.8" fill="#dff" fill-opacity="0.89"/><circle cx="118.5" cy="18.1" r="0.6" fill="#dff" fill-opacity="0.48"/><circle cx="327.4" cy="51.7" r="0.9" fill="#dff" fill-opacity="0.57"/><circle cx="54.2" cy="11.4" r="0.6" fill="#dff" fill-opacity="0.90"/><circle cx="122.4" cy="19.5" r="0.6" fill="#dff" fill-opacity="0.79"/><circle cx="267.9" cy="36.5" r="1.0" fill="#dff" fill-opacity="0.89"/><circle cx="36.7" cy="21.5" r="0.6" fill="#dff" fill-opacity="0.84"/><circle cx="221.7" cy="17.2" r="0.8" fill="#dff" fill-opacity="0.53"/><circle cx="25.2" cy="1.7" r="1.0" fill="#dff" fill-opacity="0.87"/><circle cx="50.5" cy="23.4" r="1.0" fill="#dff" fill-opacity="0.67"/><circle cx="43.5" cy="5.4" r="1.0" fill="#dff" fill-opacity="0.48"/><circle cx="249.1" cy="42.2" r="0.9" fill="#dff" fill-opacity="0.72"/><circle cx="101.7" cy="25.6" r="1.0" fill="#dff" fill-opacity="0.73"/><circle cx="180.1" cy="28.9" r="0.9" fill="#dff" fill-opacity="0.57"/><circle cx="71.8" cy="38.4" r="0.7" fill="#dff" fill-opacity="0.76"/><circle cx="294.0" cy="4.5" r="0.8" fill="#dff" fill-opacity="0.69"/><circle cx="307.6" cy="44.6" r="0.7" fill="#dff" fill-opacity="0.40"/><circle cx="309.9" cy="57.7" r="0.6" fill="#dff" fill-opacity="0.58"/><circle cx="117.4" cy="8.5" r="1.1" fill="#dff" fill-opacity="0.73"/><circle cx="46.7" cy="24.8" r="0.6" fill="#dff" fill-opacity="0.85"/><circle cx="323.4" cy="58.5" r="1.1" fill="#dff" fill-opacity="0.67"/><circle cx="145.0" cy="40.8" r="0.6" fill="#dff" fill-opacity="0.75"/><circle cx="203.4" cy="55.5" r="1.0" fill="#dff" fill-opacity="0.45"/><circle cx="46.3" cy="11.6" r="0.9" fill="#dff" fill-opacity="0.41"/><circle cx="312.1" cy="53.9" r="0.6" fill="#dff" fill-opacity="0.85"/><circle cx="85.0" cy="13.2" r="0.7" fill="#dff" fill-opacity="0.48"/><circle cx="179.7" cy="52.3" r="0.6" fill="#dff" fill-opacity="0.61"/><circle cx="263.6" cy="36.5" r="1.0" fill="#dff" fill-opacity="0.90"/><circle cx="189.7" cy="53.9" r="0.7" fill="#dff" fill-opacity="0.48"/><circle cx="255.4" cy="9.4" r="1.0" fill="#dff" fill-opacity="0.45"/><circle cx="98.9" cy="18.0" r="1.1" fill="#dff" fill-opacity="0.61"/><circle cx="49.5" cy="11.2" r="0.9" fill="#dff" fill-opacity="0.82"/></g>
<rect x="4.5" y="30" width="323" height="128.5" fill="#0a2192" fill-opacity="0.78"/>
<ellipse cx="150" cy="150" rx="140" ry="14" fill="url(#glow)" opacity="0.55"/>
<rect x="0" y="149" width="332" height="1.2" fill="url(#hl)"/>
<path d="M20 175 L150 150 M280 180 L150 150 M60 158 L150 150 M250 160 L150 150" stroke="#8fd0ff" stroke-opacity="0.25" stroke-width="0.8"/>
<path d="M290 127 L315 133" stroke="#9fd8ff" stroke-opacity="0.5" stroke-width="1"/>
<text x="166" y="77" text-anchor="middle" font-size="31" font-weight="bold" fill="#fff" textLength="247" lengthAdjust="spacingAndGlyphs">银登中心业务平台</text>
<rect x="107.5" y="105.2" width="114" height="35.6" fill="#f5a54d"/>
<text x="164.5" y="130" text-anchor="middle" font-size="20" font-weight="bold" fill="#fff5e6" textLength="80" lengthAdjust="spacingAndGlyphs">点击进入</text>
</svg>
  </div>
</div>

<svg class="a" style="left:220px;top:186px" width="40" height="10" viewBox="220 186 40 10">
<rect x="220" y="186" width="40" height="2" fill="#1c3f8a"/>
<rect x="246" y="188" width="14" height="8" fill="#1f4ea0"/>
<path d="M232 188 H247.6 Q251.2 189 254.2 196 H236 Z" fill="#8eb0ea"/>
<path d="M227.1 188 H236.8 Q239.6 189 241 196 H230.3 Z" fill="#c8d9f5"/>
</svg>
<svg class="a" style="left:1180px;top:186px" width="60" height="10" viewBox="1180 186 60 10">
<rect x="1180" y="186" width="60" height="2" fill="#1c3f8a"/>
<rect x="1214" y="188" width="26" height="8" fill="#1f4ea0"/>
<path d="M1196 188 H1221.5 Q1226 189 1229 196 H1200 Z" fill="#8eb0ea"/>
<path d="M1185.6 188 H1201 Q1205 189 1208.8 196 H1190.6 Z" fill="#c8d9f5"/>
</svg>
<!-- ROW2 -->
<div class="sec" style="top:438px"></div><div class="sect" style="top:437px">信贷资产登记流转业务</div>
<div class="a" style="left:40px;top:474px;width:820px;height:239px;border:1px solid #e8e8e8">
  <div class="hd" style="left:-1px;top:-1px;right:-1px"></div>
  <div class="tab on" style="left:0;width:168px">最新登记</div>
  <div class="tri" style="left:76px;top:46px"></div>
  <div class="tab" style="left:168px;width:168px">最新交易</div>
  <div class="tab" style="left:336px;width:168px">中债银登估值</div>
</div>
<div class="tbh" style="left:51px;top:533px;width:800px;height:44px"></div>
<div class="th c" style="left:95px;top:544px">序号</div>
<div class="th c" style="left:159px;top:544px">登记日期</div>
<div class="th" style="left:203px;top:544px">借款人所属行业</div>
<div class="th" style="left:330px;top:544px">贷款种类</div>
<div class="th c" style="left:459px;top:544px">贷款利率（%）</div>
<div class="th c" style="left:557px;top:544px">剩余期限（月）</div>
<div class="th c" style="left:643px;top:544px">担保方式</div>
<div class="th c" style="left:735px;top:544px">登记金额（万元）</div>
<div class="th c" style="left:822px;top:544px">单笔/打包</div>
<div class="td c" style="left:95px;top:589px;">1</div>
<div class="td c" style="left:159px;top:589px;">20250428</div>
<div class="td" style="left:203px;top:579px;">电力、热力、燃气及水<br>生产和供应业</div>
<div class="td" style="left:330px;top:589px;">项目贷款</div>
<div class="td c red" style="left:460px;top:589px;">4.590</div>
<div class="td c red" style="left:558px;top:589px;">144</div>
<div class="td c" style="left:643px;top:579px;">保证,抵押,质<br>押</div>
<div class="td c red" style="left:735px;top:589px;">160000.00</div>
<div class="td c" style="left:822px;top:589px;">单笔</div>
<div class="rl" style="left:51px;top:620px;width:800px"></div>
<div class="td c" style="left:95px;top:633px;">2</div>
<div class="td c" style="left:159px;top:633px;">20250423</div>
<div class="td" style="left:203px;top:623px;">水利、环境和公共设施<br>管理业</div>
<div class="td" style="left:330px;top:633px;">流动资金贷款</div>
<div class="td c red" style="left:460px;top:633px;">5.450</div>
<div class="td c red" style="left:558px;top:633px;">1</div>
<div class="td c" style="left:643px;top:633px;">保证</div>
<div class="td c red" style="left:735px;top:633px;">4996.00</div>
<div class="td c" style="left:822px;top:633px;">打包</div>
<div class="rl" style="left:51px;top:664px;width:800px"></div>
<div class="td c" style="left:95px;top:674px;">3</div>
<div class="td c" style="left:159px;top:674px;">20250411</div>
<div class="td" style="left:203px;top:674px;">建筑业</div>
<div class="td" style="left:330px;top:674px;">项目贷款</div>
<div class="td c red" style="left:460px;top:674px;">3.150</div>
<div class="td c red" style="left:558px;top:674px;">190</div>
<div class="td c" style="left:643px;top:674px;">保证</div>
<div class="td c red" style="left:735px;top:674px;">6083.33</div>
<div class="td c" style="left:822px;top:674px;">单笔</div>
<div class="rl" style="left:51px;top:702px;width:800px"></div>
<div class="a" style="left:880px;top:474px;width:360px;height:239px;border:1px solid #e8e8e8">
  <div class="hd" style="left:-1px;top:-1px;right:-1px"></div>
  <div class="tab on" style="left:0;width:170px">债权收益权业务公告</div>
  <div class="tri" style="left:77px;top:46px"></div>
  <div class="tab" style="left:179px;text-align:left">债权业务公告</div>
  <div class="more" style="left:312px;top:16px">+More</div>
  <div class="lst" style="top:63px">
<div class="li" style="top:0px"><i style="left:12px"></i><b style="left:28px">中信百信银行股份有限公司关于中信百信银...</b><em style="right:10px">[06/30]</em></div>
<div class="li" style="top:32px"><i style="left:12px"></i><b style="left:28px">璟粹2025年第九期不良资产收益权转让结果...</b><em style="right:10px">[06/27]</em></div>
<div class="li" style="top:64px"><i style="left:12px"></i><b style="left:28px">平安银行股份有限公司关于橙安2025年第二...</b><em style="right:10px">[06/27]</em></div>
<div class="li" style="top:96px"><i style="left:12px"></i><b style="left:28px">广州银行股份有限公司关于广誉2025年第二...</b><em style="right:10px">[06/26]</em></div>
<div class="li" style="top:128px"><i style="left:12px"></i><b style="left:28px">河北银行股份有限公司关于冀赢2025年第三...</b><em style="right:10px">[06/26]</em></div>
</div></div>
<!-- ROW3 -->
<div class="sec" style="top:726px"></div><div class="sect" style="top:725px">不良贷款转让业务</div>
<div class="a" style="left:40px;top:762px;width:820px;height:260px;border:1px solid #e8e8e8">
  <div class="hd" style="left:-1px;top:-1px;right:-1px"></div>
  <div class="tab on" style="left:0;width:168px">项目挂牌信息</div>
  <div class="tri" style="left:76px;top:46px"></div>
</div>
<div class="td c" style="left:97px;top:866px;">1</div>
<div class="td c" style="left:187px;top:858px;line-height:18px">中国建设银行股份有限<br>公司重庆市分行...</div>
<div class="td c" style="left:297px;top:866px;">个人批量转让</div>
<div class="td c red" style="left:412px;top:866px;">6345.06</div>
<div class="td c" style="left:542px;top:866px;">2025/07/18 15:00:00</div>
<div class="td c" style="left:647px;top:866px;">2025/07/23</div>
<div class="td c red" style="left:737px;top:866px;">-</div>
<div class="rl" style="left:51px;top:894px;width:800px"></div>
<div class="td c" style="left:97px;top:903px;">2</div>
<div class="td c" style="left:187px;top:895px;line-height:18px">交通银行股份有限公司<br>太平洋信用卡中...</div>
<div class="td c" style="left:297px;top:903px;">个人批量转让</div>
<div class="td c red" style="left:412px;top:903px;">220459.96</div>
<div class="td c" style="left:542px;top:903px;">2025/07/25 17:00:00</div>
<div class="td c" style="left:647px;top:903px;">2025/07/29</div>
<div class="td c red" style="left:737px;top:903px;">-</div>
<div class="rl" style="left:51px;top:931px;width:800px"></div>
<div class="td c" style="left:97px;top:940px;">3</div>
<div class="td c" style="left:187px;top:932px;line-height:18px">交通银行股份有限公司<br>太平洋信用卡中...</div>
<div class="td c" style="left:297px;top:940px;">个人批量转让</div>
<div class="td c red" style="left:412px;top:940px;">109642.6</div>
<div class="td c" style="left:542px;top:940px;">2025/07/25 17:00:00</div>
<div class="td c" style="left:647px;top:940px;">2025/07/29</div>
<div class="td c red" style="left:737px;top:940px;">-</div>
<div class="rl" style="left:51px;top:969px;width:800px"></div>
<div class="a" style="left:51px;top:868px;width:800px;height:100px;border-left:1px solid #e2e2e2;border-right:1px solid #e2e2e2"></div>
<div class="tbh" style="left:51px;top:823px;width:800px;height:45px;border-bottom:none"></div>
<div class="th c" style="left:97px;top:835px">序号</div>
<div class="th c" style="left:187px;top:835px">项目名称</div>
<div class="th c" style="left:297px;top:835px">项目类型</div>
<div class="th c" style="left:412px;top:835px">未偿本息总额(万元)</div>
<div class="th c" style="left:542px;top:835px">报名截止时间</div>
<div class="th c" style="left:647px;top:835px">竞价日</div>
<div class="th c" style="left:737px;top:835px">保证金金额(万元)</div>
<div class="a" style="left:880px;top:762px;width:360px;height:260px;border:1px solid #e8e8e8">
  <div class="hd" style="left:-1px;top:-1px;right:-1px"></div>
  <div class="tab on" style="left:0;width:145px">转让公告</div>
  <div class="tri" style="left:64px;top:46px"></div>
  <div class="tab" style="left:164px;text-align:left">资产招商专区</div>
  <div class="more" style="left:312px;top:16px">+More</div>
  <div class="lst" style="top:63px">
<div class="li" style="top:0px"><i style="left:12px"></i><b style="left:28px">平安银行股份有限公司关于2025年大连东宜...</b><em style="right:10px">[07/09]</em></div>
<div class="li" style="top:32px"><i style="left:12px"></i><b style="left:28px">中国建设银行股份有限公司重庆市分行关于2...</b><em style="right:10px">[07/08]</em></div>
<div class="li" style="top:64px"><i style="left:12px"></i><b style="left:28px">交通银行股份有限公司太平洋信用卡中心关...</b><em style="right:10px">[07/08]</em></div>
<div class="li" style="top:96px"><i style="left:12px"></i><b style="left:28px">交通银行股份有限公司太平洋信用卡中心关...</b><em style="right:10px">[07/08]</em></div>
</div></div>
</div></body></html>
